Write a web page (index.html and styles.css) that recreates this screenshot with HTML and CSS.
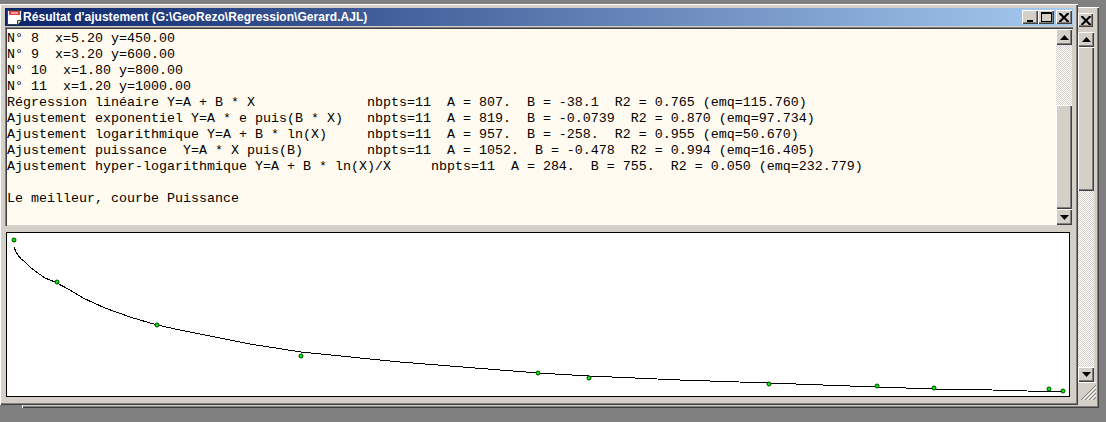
FILE: index.html
```html
<!DOCTYPE html>
<html lang="fr">
<head>
<meta charset="utf-8">
<title>Résultat d'ajustement</title>
<link rel="stylesheet" href="styles.css">
</head>
<body>
<div class="desk">
  <div class="parent">
    <div class="parent-main"><div class="parent-bar"></div></div>
    <div class="parent-side">
      <button class="btn parent-close"><svg class="glyph" width="10" height="9" viewBox="0 0 10 9"><path d="M0 0h2l3 3 3-3h2v1L6.500 4.500 10 8v1H8L5 6 2 9H0V8l3.500-3.500L0 1z"/></svg></button>
      <div class="vscroll outer-scroll">
        <button class="btn arrow"><svg width="9" height="5" viewBox="0 0 9 5"><path d="M4.500 0 9 5H0z"/></svg></button>
        <div class="thumb outer-thumb"></div>
        <div class="track"></div>
        <button class="btn arrow"><svg width="9" height="5" viewBox="0 0 9 5"><path d="M0 0h9L4.500 5z"/></svg></button>
      </div>
      <div class="grip"><svg width="16" height="16" viewBox="0 0 16 16"><path class="grip-dark" d="M16 1 1 16M16 5 5 16M16 9 9 16M16 13 13 16"/><path class="grip-light" d="M16 3 3 16M16 7 7 16M16 11 11 16"/></svg></div>
    </div>
  </div>

  <div class="window">
    <header class="titlebar">
      <svg class="appicon" width="17" height="17" viewBox="0 0 17 17">
        <path d="M1.500 1.500h14v9l-4 5h-10z" fill="#fff" stroke="#404040"/>
        <path d="M3 2h11v4H3z" fill="#e04040"/>
        <path d="M5 4h7" stroke="#fff"/>
        <path d="M11.500 15.500v-4h4" fill="#d4d0c8" stroke="#404040"/>
      </svg>
      <span class="title">Résultat d'ajustement (G:\GeoRezo\Regression\Gerard.AJL)</span>
      <div class="caption">
        <button class="btn cap"><svg class="glyph" width="10" height="9" viewBox="0 0 10 9"><path d="M2 7h6v2H2z"/></svg></button>
        <button class="btn cap"><svg class="glyph" width="11" height="10" viewBox="0 0 11 10"><path d="M0 0h11v10H0zM1 2v7h9V2z" fill-rule="evenodd"/></svg></button>
        <button class="btn cap cap-close"><svg class="glyph" width="10" height="9" viewBox="0 0 10 9"><path d="M0 0h2l3 3 3-3h2v1L6.500 4.500 10 8v1H8L5 6 2 9H0V8l3.500-3.500L0 1z"/></svg></button>
      </div>
    </header>

    <section class="output">
      <pre class="log">N° 8  x=5.20 y=450.00
N° 9  x=3.20 y=600.00
N° 10  x=1.80 y=800.00
N° 11  x=1.20 y=1000.00
Régression linéaire Y=A + B * X              nbpts=11  A = 807.  B = -38.1  R2 = 0.765 (emq=115.760)
Ajustement exponentiel Y=A * e puis(B * X)   nbpts=11  A = 819.  B = -0.0739  R2 = 0.870 (emq=97.734)
Ajustement logarithmique Y=A + B * ln(X)     nbpts=11  A = 957.  B = -258.  R2 = 0.955 (emq=50.670)
Ajustement puissance  Y=A * X puis(B)        nbpts=11  A = 1052.  B = -0.478  R2 = 0.994 (emq=16.405)
Ajustement hyper-logarithmique Y=A + B * ln(X)/X     nbpts=11  A = 284.  B = 755.  R2 = 0.050 (emq=232.779)

Le meilleur, courbe Puissance</pre>
      <div class="vscroll inner-scroll">
        <button class="btn arrow"><svg width="9" height="5" viewBox="0 0 9 5"><path d="M4.500 0 9 5H0z"/></svg></button>
        <div class="track"></div>
        <div class="thumb inner-thumb"></div>
        <button class="btn arrow"><svg width="9" height="5" viewBox="0 0 9 5"><path d="M0 0h9L4.500 5z"/></svg></button>
      </div>
    </section>

    <section class="chart">
      <svg class="plot" width="1062" height="163" viewBox="7 233 1062 163">
        <polyline class="curve" points="14,247 16,252 18,255 21,259 25,262 30,267 35,271 45,278 55,282 70,290 83,298 105,308 130,317 157,325 180,330 200,334 250,344 301,352 400,362 538,373 589,376 680,380 769,383 877,387 934,389 992,390 1027,391 1063,392"/>
        <g class="dots">
          <circle cx="14" cy="240" r="2"/><circle cx="57" cy="282" r="2"/><circle cx="157" cy="325" r="2"/>
          <circle cx="301" cy="356" r="2"/><circle cx="538" cy="373" r="2"/><circle cx="589" cy="378" r="2"/>
          <circle cx="769" cy="384" r="2"/><circle cx="877" cy="386" r="2"/><circle cx="934" cy="388" r="2"/>
          <circle cx="1049" cy="389" r="2"/><circle cx="1063" cy="391" r="2"/>
        </g>
      </svg>
    </section>
  </div>
</div>
</body>
</html>
```
FILE: styles.css
```css
* { box-sizing: border-box; }

html, body { margin: 0; padding: 0; }

body { background: #808080; overflow: hidden; }

.desk {
  position: relative;
  width: 1106px;
  height: 422px;
  background: #808080;
}

/* Parent frame behind the child window */
.parent {
  position: absolute;
  left: 22px;
  top: 7px;
  width: 1077px;
  height: 401px;
  display: flex;
  background: #d4d0c8;
  box-shadow: inset 1px 1px #fff, inset -1px -1px #404040, inset -2px -2px #808080;
}

.parent-main { flex: 1; }

.parent-side {
  width: 42px;
  padding: 6px 5px 2px 21px;
  display: flex;
  flex-direction: column;
}

.parent-close {
  width: 15px;
  height: 14px;
  margin-bottom: 5px;
}

.outer-scroll { height: 350px; width: 16px; }

.outer-scroll .arrow { height: 15px; }

.outer-thumb { height: 144px; }

.grip {
  width: 20px;
  height: 18px;
  margin-left: -2px;
  display: flex;
  justify-content: flex-end;
  align-items: flex-end;
  border-top: 1px solid #fff;
}

.grip-dark { stroke: #808080; fill: none; }
.grip-light { stroke: #fff; fill: none; }

/* Child window */
.window {
  position: absolute;
  left: 0;
  top: 4px;
  width: 1078px;
  height: 401px;
  padding: 4px 5px 8px 5px;
  display: flex;
  flex-direction: column;
  background: #d4d0c8;
  box-shadow: inset 1px 1px #fff, inset -1px -1px #404040, inset -2px -2px #808080;
}

.titlebar {
  height: 18px;
  flex: none;
  display: flex;
  align-items: center;
  padding-left: 1px;
  background: linear-gradient(90deg, #0a246a, #a6caf0);
}

.appicon { flex: none; }

.title {
  flex: 1;
  font: bold 12px/16px "Liberation Sans", Arial, sans-serif;
  letter-spacing: 0.05px;
  color: #fff;
  white-space: nowrap;
}

.caption {
  display: flex;
  padding-right: 1px;
}

.btn {
  display: flex;
  align-items: center;
  justify-content: center;
  padding: 0;
  border: 0;
  background: #d4d0c8;
  box-shadow: inset 1px 1px #fff, inset -1px -1px #404040, inset -2px -2px #808080;
}

.cap { width: 16px; height: 14px; }

.cap-close { margin-left: 2px; }

.glyph { display: block; }

.output {
  height: 199px;
  margin-top: 1px;
  flex: none;
  display: flex;
  background: #fffbf0;
  box-shadow: inset 1px 1px #808080, inset 2px 2px #404040, inset -1px -1px #d4d0c8;
  padding: 2px 1px 1px 2px;
  overflow: hidden;
}

.log {
  flex: 1;
  margin: 0;
  padding-top: 2px;
  overflow: hidden;
  font: 13.333px/16px "Liberation Mono", "Courier New", monospace;
  color: #000;
}

.vscroll {
  display: flex;
  flex-direction: column;
  flex: none;
  width: 16px;
}

.arrow { height: 16px; flex: none; width: 100%; }

.track {
  flex: 1;
  background-color: #fff;
  background-image: conic-gradient(#d4d0c8 25%, #fff 0 50%, #d4d0c8 0 75%, #fff 0);
  background-size: 2px 2px;
}

.thumb {
  flex: none;
  background: #d4d0c8;
  box-shadow: inset 1px 1px #fff, inset -1px -1px #404040, inset -2px -2px #808080;
}

.inner-thumb { height: 104px; }

.chart {
  height: 165px;
  width: 1064px;
  margin: 6px 0 0 1px;
  flex: none;
  background: #fff;
  border: 1px solid #000;
}

.plot { display: block; }

.curve {
  fill: none;
  stroke: #000;
  stroke-width: 1;
  shape-rendering: crispEdges;
}

.dots circle {
  fill: #00f000;
  stroke: #004000;
  stroke-width: 1;
}
```
